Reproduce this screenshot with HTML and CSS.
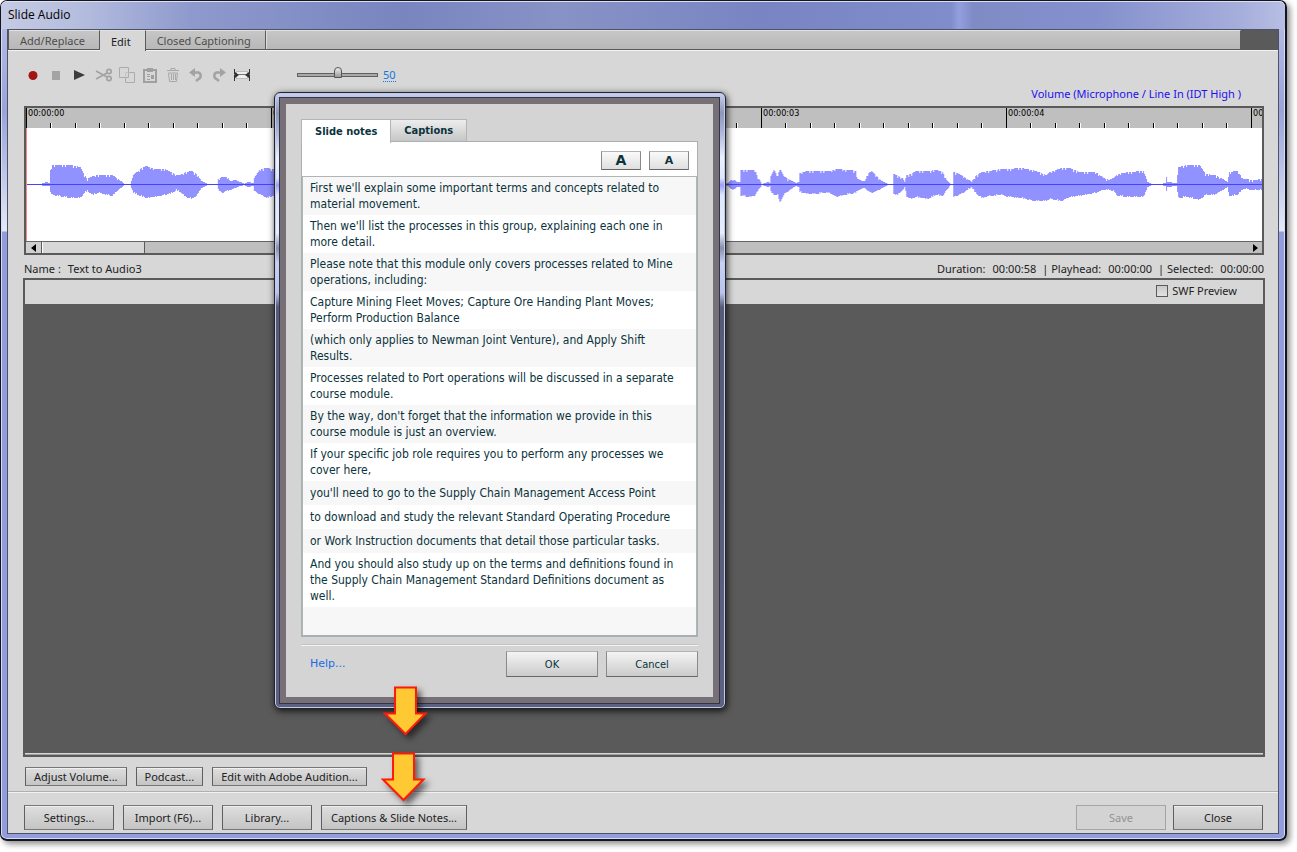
FILE: index.html
```html
<!DOCTYPE html>
<html lang="en">
<head>
  <meta charset="UTF-8" />
  <meta name="viewport" content="width=device-width, initial-scale=1" />
  <title>Slide Audio</title>
  <link rel="stylesheet" href="styles.css">
</head>
<body>
  <div class="window">
    <h1 class="titlebar">Slide Audio</h1>
    <main class="client">
      <nav class="tabs">
        <button class="tab">Add/Replace</button>
        <button class="tab active">Edit</button>
        <button class="tab">Closed Captioning</button>
        <span class="tabs-fill"></span>
      </nav>

      <div class="toolbar">
        <button aria-label="Record"><svg viewBox="0 0 18 18"><circle cx="9" cy="9.500" r="4.500" fill="#a31515"/></svg></button>
        <button aria-label="Stop" disabled><svg viewBox="0 0 18 18"><path d="M5 5h8v9H5z" fill="#a3a3a3"/></svg></button>
        <button class="play" aria-label="Play"><svg viewBox="0 0 18 18"><path d="M4 4l11 5-11 5z" fill="#3c3c3c"/></svg></button>
        <button aria-label="Cut" disabled><svg viewBox="0 0 18 18" fill="none" stroke="#a3a3a3" stroke-width="1.700"><path d="M1 5l11 6M1 13l11-6"/><circle cx="14" cy="5.500" r="2.200"/><circle cx="14" cy="12.500" r="2.200"/></svg></button>
        <button aria-label="Copy" disabled><svg viewBox="0 0 18 18" fill="#d7d7d7" stroke="#ababab"><path d="M7.500 6.500h9v10h-9z"/><path d="M1.500 1.500h9v10h-9z"/><path d="M7.500 11.500v-5h3" fill="none" stroke="#c4c4c4"/></svg></button>
        <button aria-label="Paste" disabled><svg viewBox="0 0 18 18"><path d="M3 4h12v12H3z" fill="none" stroke="#a0a0a0" stroke-width="2"/><path d="M6 2h6v4H6zM6 8h3v1H6zm0 2h3v1H6zm4-1h3v4h-3zm-4 4h3v1H6z" fill="#a0a0a0"/></svg></button>
        <button aria-label="Delete" disabled><svg viewBox="0 0 18 18" fill="none" stroke="#a8a8a8"><path d="M3 4.500h12M7 4V2.500h4V4M4.500 7h9l-1 8.500h-7zM7.500 8v6M9.500 8v6M11.500 8v6"/></svg></button>
        <button aria-label="Undo" disabled><svg viewBox="0 0 18 18"><path d="M7 6.500h4.500a3.500 3.500 0 0 1 0 6.500L9 15" fill="none" stroke="#a3a3a3" stroke-width="2.500"/><path d="M2 6.500L8 2v9z" fill="#a3a3a3"/></svg></button>
        <button aria-label="Redo" disabled><svg viewBox="0 0 18 18"><path d="M11 6.500H6.500a3.500 3.500 0 0 0 0 6.500L9 15" fill="none" stroke="#a3a3a3" stroke-width="2.500"/><path d="M16 6.500L10 2v9z" fill="#a3a3a3"/></svg></button>
        <button aria-label="Insert silence"><svg viewBox="0 0 18 18"><path d="M3 5h12v8H3z" fill="#bbb"/><path d="M4 6h10v6H4z" fill="#eee"/><path d="M1.500 3v12M16.500 3v12" stroke="#333"/><path d="M1 8.500h16" stroke="#777"/><path d="M2 6l4 3-4 3zM16 6l-4 3 4 3z" fill="#333"/></svg></button>
        <input class="zoom" type="range" min="0" max="100" value="50" aria-label="Zoom">
        <a class="zoom-value" href="#">50</a>
      </div>

      <p class="device">Volume (Microphone / Line In (IDT High )</p>

      <section class="wave">
        <div class="ruler" id="ruler"></div>
        <svg class="wave-plot" viewBox="0 0 1237 113" preserveAspectRatio="none">
          <path id="envelope" fill="#9191ff"/>
          <path d="M0 56.500H1237" stroke="#4343fa"/>
          <path d="M.5 0V113" stroke="#f58a8a"/>
        </svg>
        <div class="scroll">
          <button class="scroll-arrow" aria-label="Scroll left"><svg viewBox="0 0 6 8"><path d="M5 0v8L0 4z"/></svg></button>
          <div class="scroll-thumb"></div>
          <button class="scroll-arrow end" aria-label="Scroll right"><svg viewBox="0 0 6 8"><path d="M1 0v8l5-4z"/></svg></button>
        </div>
      </section>

      <div class="info">
        <span>Name :</span>
        <span>Text to Audio3</span>
        <span class="push">Duration:</span><span>00:00:58</span>
        <span class="info-part">| Playhead:</span><span>00:00:00</span>
        <span class="info-part">| Selected:</span><span>00:00:00</span>
      </div>

      <section class="preview">
        <div class="preview-head">
          <label><input type="checkbox"> SWF Preview</label>
        </div>
        <div class="stage"></div>
      </section>

      <div class="actions">
        <button class="btn">Adjust Volume...</button>
        <button class="btn">Podcast...</button>
        <button class="btn">Edit with Adobe Audition...</button>
      </div>

      <footer class="footer">
        <button class="btn">Settings...</button>
        <button class="btn">Import (F6)...</button>
        <button class="btn">Library...</button>
        <button class="btn wide">Captions &amp; Slide Notes...</button>
        <div class="footer-end">
          <button class="btn" disabled>Save</button>
          <button class="btn">Close</button>
        </div>
      </footer>
    </main>
  </div>

  <div class="dialog" role="dialog" aria-label="Slide notes">
    <div class="dialog-body">
      <div class="dialog-tabs">
        <button class="dialog-tab active">Slide notes</button>
        <button class="dialog-tab">Captions</button>
      </div>
      <div class="notes">
        <div class="notes-tools">
          <button class="soft" aria-label="Larger text"><b class="big">A</b></button>
          <button class="soft" aria-label="Smaller text"><b>A</b></button>
        </div>
        <ul class="notes-list">
          <li>First we'll explain some important terms and concepts related to<br>material movement.</li>
          <li>Then we'll list the processes in this group, explaining each one in<br>more detail.</li>
          <li>Please note that this module only covers processes related to Mine<br>operations, including:</li>
          <li>Capture Mining Fleet Moves; Capture Ore Handing Plant Moves;<br>Perform Production Balance</li>
          <li>(which only applies to Newman Joint Venture), and Apply Shift<br>Results.</li>
          <li>Processes related to Port operations will be discussed in a separate<br>course module.</li>
          <li>By the way, don't forget that the information we provide in this<br>course module is just an overview.</li>
          <li>If your specific job role requires you to perform any processes we<br>cover here,</li>
          <li>you'll need to go to the Supply Chain Management Access Point</li>
          <li>to download and study the relevant Standard Operating Procedure</li>
          <li>or Work Instruction documents that detail those particular tasks.</li>
          <li>And you should also study up on the terms and definitions found in<br>the Supply Chain Management Standard Definitions document as<br>well.</li>
          <li class="blank"></li>
        </ul>
      </div>
      <div class="dialog-foot">
        <a href="#">Help...</a>
        <button class="soft">OK</button>
        <button class="soft">Cancel</button>
      </div>
    </div>
  </div>

  <svg class="arrow arrow-top" viewBox="0 0 46 52"><path d="M12 1.500h21v26h9.500L22.500 48 2 27.500h10z"/></svg>
  <svg class="arrow arrow-bottom" viewBox="0 0 46 52"><path d="M12 1.500h21v26h9.500L22.500 48 2 27.500h10z"/></svg>

  <script src="script.js"></script>
</body>
</html>
```
FILE: styles.css
```css
* { margin:0; padding:0; box-sizing:border-box }
body {
  position:relative;
  display:flex;
  min-height:100vh;
  padding:0 10px 11px 0;
  background:#fff;
  font-family:"Noto Sans",sans-serif;
  font-size:11px;
  color:#222;
}
button, input { font:inherit; color:inherit }
ul { list-style:none }
.push { margin-left:auto }

/* main window */
.window {
  flex:1; min-width:0;
  display:flex; flex-direction:column;
  padding:0 6px 5px;
  border:1px solid #15151f;
  border-width:1px 2px 2px 1px;
  border-radius:7px;
  background:
    linear-gradient(to bottom,transparent 230px,#929ddd 231px),
    linear-gradient(to bottom,#b9c1e6,#9aa4da 110px,#b5bee6 160px,#e4e9f8 230px);
  box-shadow:inset 0 0 0 1px #d5dcf5, 3px 3px 6px rgba(0,0,0,0.45);
}
.titlebar {
  height:28px;
  margin:0 -6px; padding-left:7px;
  border-radius:6px 6px 0 0;
  border-top:1px solid #dbe0f5;
  font:12px/26px "Open Sans",sans-serif;
  color:#000;
  background:linear-gradient(to right,#c5cbe4,#b6bedf 75px,#8e9acd 190px,#7885bf 400px,#8792c6 560px,#7885c2 760px,#7f8dca 950px,#93a0df 958px,#7f8bc5 972px,#8491cd 1100px,#a6aedb 1240px,#b7bfe5);
}
.client {
  flex:1; min-width:0;
  display:flex; flex-direction:column;
  border:1px solid #4d5365;
  background:#d7d7d7;
}

/* tabs */
.tabs {
  display:flex;
  height:20px;
  padding:0 37px 0 1px;
  border-bottom:1px solid #5a5a5a;
  background:#5a5a5a;
  box-shadow:0 1px #f2f2f2;
}
.tab, .tabs-fill {
  height:19px;
  border:0; border-top:1px solid #e2e2e2; border-right:1px solid #5a5a5a;
  background:linear-gradient(#c6c6c6,#b8b8b8);
  color:#4e4e4e;
}
.tab { padding:0 14px 0 11px }
.tab.active { height:21px; background:#d7d7d7; color:#222 }
.tabs-fill { flex:1; border-left:1px solid #ddd }

/* toolbar */
.toolbar {
  display:flex; align-items:center; gap:5px;
  height:22px;
  margin-top:14px; padding-left:16px;
}
.toolbar button { width:18px; height:18px; border:0; background:none }
.toolbar svg { display:block; width:18px; height:18px }
.toolbar .play { margin-right:2px }
.zoom {
  appearance:none;
  width:81px; height:14px;
  margin-left:41px;
  background:none;
}
.zoom::-webkit-slider-runnable-track {
  height:4px;
  border:1px solid #606060;
  background:#a9a9a9;
}
.zoom::-webkit-slider-thumb {
  appearance:none;
  width:8px; height:11px;
  margin-top:-7px;
  background:linear-gradient(#eee,#999);
  border:1px solid #555;
  border-radius:4px 4px 0 0;
}
.zoom-value { line-height:13px; color:#1577d8; text-decoration:none; border-bottom:1px dotted #1577d8 }
.device {
  margin-right:37px;
  line-height:16px;
  text-align:right;
  color:#1a10f0;
}

/* waveform */
.wave {
  margin:4px 14px 0 16px;
  border:2px solid #5a5a5a;
  background:#fff;
}
.ruler {
  display:grid; grid-auto-flow:column; grid-auto-columns:245px;
  height:20px;
  overflow:hidden;
  background:#bfbfbf;
}
.second {
  position:relative;
  height:20px;
  border-left:1px solid #000; padding-left:1px;
  color:#000;
  font:9px/11px "DejaVu Sans Condensed","DejaVu Sans",sans-serif;
  font-stretch:condensed;
}
.tick { position:absolute; bottom:0; width:2px; height:5px; border-left:1px solid #000; background:#fff }
.wave-plot { display:block; width:100%; height:113px }
.scroll {
  display:flex;
  height:12px;
  border-top:1px solid #666;
  background:#bfbfbf;
}
.scroll-arrow { display:grid; place-items:center; width:15px; height:11px; border:0; background:#d0d0d0 }
.scroll-arrow svg { width:6px; height:8px }
.scroll-arrow.end { margin-left:auto; background:none }
.scroll-thumb { width:104px; border:solid #5a5a5a; border-width:0 1px; background:#d7d7d7; box-shadow:inset 1px 0 #fff }

.info {
  display:flex; gap:7px;
  margin:7px 14px 0 16px;
  line-height:14px;
}
.info-part { margin-left:-1px }

/* preview */
.preview {
  flex:1;
  display:flex; flex-direction:column;
  margin:2px 13px 0 15px;
  border:2px solid #5a5a5a;
  box-shadow:inset 0 -1px #a0a0a0;
}
.preview-head { display:flex; justify-content:flex-end; height:24px; padding-right:26px }
.preview-head label { display:flex; align-items:center; gap:4px; height:21px }
.preview-head input {
  appearance:none;
  width:12px; height:12px;
  border:1px solid #5a5a5a;
  background:linear-gradient(#c9c9c9,#e2e2e2);
}
.stage { flex:1; margin-bottom:2px; background:#5a5a5a }

/* buttons */
.btn {
  border:1px solid #5f5f5f;
  border-top-color:#777; border-bottom-color:#777;
  background:linear-gradient(#dedede,#c4c4c4);
  box-shadow:inset 0 1px #f0f0f0;
}
.btn:disabled { border-color:#a5a5a5; background:#d3d3d3; color:#949494; box-shadow:none }
.actions { display:flex; gap:9px; padding:10px 17px 5px }
.actions .btn { height:19px; padding:0 8px }
.footer {
  display:flex; gap:9px;
  padding:13px 15px 3px 16px;
  border-top:1px solid #b0b0b0;
  box-shadow:inset 0 1px #f2f2f2;
}
.footer .btn { width:90px; height:25px }
.footer .wide { width:146px }
.footer-end { display:flex; gap:7px; margin-left:auto }

/* notes dialog, floats over the window */
.dialog {
  position:absolute; top:92px; left:274px;
  width:452px;
  padding:5px 6px 5px 5px;
  border:1px solid #24242e;
  border-radius:6px;
  background:linear-gradient(#c9d2f3,#8d97b8 20px,#aeb8de 40px,#eaf1ff 65px,#dce8ff 85px,#9c9cfc 92px,#dce8ff 102px,#e4eeff 140px,#8790ac 155px,#c6d1f5 170px,#b8c4ef 200px,#565b78 214px,#5d6182);
  box-shadow:inset 0 0 0 1px #c3cae6, 1px 2px 7px rgba(0,0,0,0.8);
  font-family:"DejaVu Sans Condensed","DejaVu Sans",sans-serif;
  font-stretch:condensed;
}
.dialog-body {
  padding:15px;
  border:6px solid #777077;
  outline:1px solid #343543;
  background:#d4d4d4;
  color:#0b333c;
}
.dialog-tabs { display:flex; height:22px }
.dialog-tab {
  height:22px;
  border:1px solid #b0b5b8; border-bottom:0; border-left:0;
  padding:0 13px;
  background:linear-gradient(#ededed,#c6c6c6);
  font-weight:bold;
}
.dialog-tab.active { position:relative; height:24px; border-left:1px solid #b0b5b8; background:#fff }
.notes { border:1px solid #a9b0b3; border-bottom-width:2px; background:#fff }
.notes-tools { display:flex; gap:8px; justify-content:flex-end; padding:9px 8px 6px 0 }
.soft {
  border:1px solid #9a9a9a;
  border-color:#b2b2b2 #8a8a8a #666;
  background:linear-gradient(#fafafa,#dfdfdf);
}
.notes-tools .soft { width:40px; height:19px; line-height:16px; font-family:"DejaVu Sans",sans-serif; font-stretch:normal }
.big { font-size:14px; line-height:16px }
.notes-list { border:1px solid #b0b6b8; border-bottom:0; font-size:12px; line-height:16px }
.notes-list li {
  display:flex; align-items:center;
  min-height:24px;
  padding:3px 7px;
  white-space:nowrap;
}
.notes-list li:nth-child(odd) { background:#f7f7f7 }
.notes-list .blank { height:28px }
.dialog-foot {
  display:flex; gap:8px; align-items:flex-start;
  margin-top:7px; padding:6px 0 5px;
  border-top:1px solid #c0c4c4;
  box-shadow:inset 0 1px #f4f4f4;
}
.dialog-foot a {
  margin-right:auto; padding:6px 0 0 9px;
  color:#1a6be8; text-decoration:none;
  font-family:"DejaVu Sans",sans-serif; font-stretch:normal;
}
.dialog-foot .soft { width:92px; height:26px; background:linear-gradient(#f4f4f4,#cbcbcb) }

/* callout arrows */
.arrow {
  position:absolute;
  width:46px; height:52px;
  fill:#ffc933; stroke:#ff1a0a; stroke-width:2;
  filter:drop-shadow(4px 4px 3px rgba(0,0,0,0.55));
}
.arrow-top { left:383px; top:686px }
.arrow-bottom { left:381px; top:752px }
```
FILE: script.js
```js
// seconds on the ruler, nine small ticks between two of them
const ruler = document.getElementById("ruler");
for (let s = 0; s < 6; s++) {
  const cell = document.createElement("div");
  cell.className = "second";
  cell.textContent = "00:00:0" + s;
  for (let t = 1; t < 10; t++) {
    const tick = document.createElement("span");
    tick.className = "tick";
    tick.style.left = Math.floor(t * 24.5) - 1 + "px";
    cell.appendChild(tick);
  }
  ruler.appendChild(cell);
}

// x, height above the line, height below it
const points = [
  [0,0,0],[14,0,0],[18,1,1],[20,2,1],[23,1,1],[24,14,8],[26,19,10],[44,19,13],[54,17,13],[58,9,8],
  [61,5,6],[66,8,10],[72,9,8],[86,9,11],[92,5,5],[98,0,0],[104,0,0],[107,9,8],[114,15,11],
  [120,18,13],[129,15,12],[139,15,10],[146,11,8],[150,9,5],[154,9,7],[159,12,12],[166,13,14],
  [171,9,10],[175,3,3],[181,0,0],[191,0,0],[192,5,5],[196,7,8],[201,7,6],[204,3,5],[209,4,3],
  [214,2,1],[218,0,0],[221,2,2],[227,1,1],[228,6,6],[234,15,10],[241,16,13],[249,14,10],
  [270,14,10],[271,0,0],[700,0,0],[707,5,5],[711,2,2],[714,2,2],[715,14,11],[724,14,12],
  [729,14,11],[732,7,6],[736,0,0],[742,2,2],[744,1,1],[745,8,7],[748,14,10],[752,8,10],
  [754,16,18],[758,8,10],[764,4,5],[770,1,1],[773,2,2],[774,11,7],[782,13,9],[804,13,8],
  [810,15,12],[824,14,9],[830,13,8],[832,5,6],[837,3,3],[839,3,3],[842,10,6],[846,13,8],
  [852,7,6],[856,3,3],[862,0,0],[867,0,0],[868,10,9],[872,8,10],[877,6,5],[879,2,2],[881,9,12],
  [886,10,14],[890,13,12],[902,13,14],[911,14,10],[917,12,11],[921,4,5],[925,0,0],[927,0,0],
  [928,12,12],[936,9,9],[942,5,5],[946,2,2],[950,8,8],[956,12,13],[964,13,11],[976,15,10],
  [982,15,12],[996,16,13],[1007,14,16],[1021,9,16],[1024,12,14],[1036,16,16],[1044,16,12],
  [1054,12,11],[1070,12,8],[1078,6,5],[1084,4,5],[1088,6,6],[1092,10,11],[1104,12,12],
  [1118,13,12],[1122,2,2],[1126,0,0],[1136,0,0],[1140,1,1],[1141,7,6],[1142,2,2],[1151,1,1],
  [1153,17,13],[1162,19,12],[1174,19,15],[1180,10,10],[1189,9,10],[1196,6,6],[1202,2,2],
  [1204,12,11],[1212,13,10],[1218,5,4],[1228,4,5],[1237,5,5]
];

let d = "";
for (let i = 1; i < points.length; i++) {
  const [x0, u0, d0] = points[i - 1];
  const [x1, u1, d1] = points[i];
  for (let x = x0; x < x1; x++) {
    const k = (x - x0) / (x1 - x0);
    let up = u0 + (u1 - u0) * k;
    let down = d0 + (d1 - d0) * k;
    if (up > 4) {
      up += (x * 7) % 11 > 8 ? -2 : 0;
      down += (x * 11) % 7 > 4 ? -1 : 0;
    }
    up = Math.round(up);
    down = Math.round(down);
    if (up + down > 0) d += `M${x} ${56 - up}h1v${up + down + 1}h-1z`;
  }
}
document.getElementById("envelope").setAttribute("d", d);
```
